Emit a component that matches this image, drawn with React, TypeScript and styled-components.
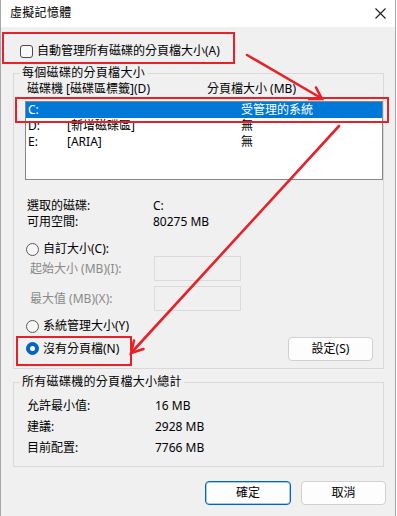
import React from "react";
import styled, { createGlobalStyle } from "styled-components";

const GlobalStyle = createGlobalStyle`
  html, body { margin: 0; padding: 0; background: #ffffff; }
  body {
    font-family: "Noto Sans", "Noto Sans CJK TC", sans-serif;
    font-size: 12px;
    color: #000;
  }
  * { box-sizing: border-box; }
`;

const Window = styled.div`
  position: relative;
  width: 396px;
  height: 516px;
  background: #f0f0f0;
  border-left: 1px solid #a8a8a8;
  border-right: 1px solid #a8a8a8;
  display: flex;
  flex-direction: column;
`;

const TitleBar = styled.div`
  height: 27px;
  background: #ffffff;
  display: flex;
  align-items: center;
  justify-content: space-between;
  padding: 0 9px 1px 9px;
`;

const Title = styled.div`
  font-size: 12px;
  line-height: 16px;
  letter-spacing: 0.3px;
`;

const Body = styled.div`
  display: flex;
  flex-direction: column;
  padding-left: 12px;
`;

const CheckRow = styled.label`
  display: flex;
  align-items: center;
  gap: 4px;
  height: 16px;
  margin: 16px 0 0 7px;
  line-height: 16px;
`;

const CheckBox = styled.span`
  width: 13px;
  height: 13px;
  border: 1px solid #4a4a4a;
  border-radius: 3px;
  background: #f8f8f8;
`;

const Group = styled.fieldset<{ $top: number; $pb: number }>`
  width: 371px;
  margin: ${(p) => p.$top}px 0 0 0;
  padding: 0 0 ${(p) => p.$pb}px 11px;
  border: 1px solid #d9d9d9;
  min-width: 0;
`;

const Legend = styled.legend`
  margin-left: -5px;
  padding: 0 2px;
  line-height: 16px;
  font-size: 12px;
  letter-spacing: 0.3px;
`;

const HeaderRow = styled.div`
  display: grid;
  grid-template-columns: 180px 1fr;
  height: 16px;
  line-height: 16px;
  padding-left: 2px;
`;

const ListBox = styled.div`
  width: 358px;
  height: 79px;
  margin-top: 4px;
  border: 1px solid #868686;
  background: #ffffff;
  display: flex;
  flex-direction: column;
`;

const ListRow = styled.div<{ $selected?: boolean }>`
  display: grid;
  grid-template-columns: 39px 174px 1fr;
  height: 16px;
  line-height: 16px;
  padding-left: 2px;
  background: ${(p) => (p.$selected ? "#0078d7" : "transparent")};
  color: ${(p) => (p.$selected ? "#ffffff" : "#000000")};
`;

const InfoGrid = styled.div<{ $top: number; $col: number; $gap: number }>`
  display: grid;
  grid-template-columns: ${(p) => p.$col}px 1fr;
  grid-auto-rows: 16px;
  row-gap: ${(p) => p.$gap}px;
  line-height: 16px;
  margin-top: ${(p) => p.$top}px;
  padding-left: 2px;
`;

const RadioRow = styled.label<{ $top: number }>`
  display: flex;
  align-items: center;
  gap: 4px;
  height: 14px;
  line-height: 14px;
  margin-top: ${(p) => p.$top}px;
  padding-left: 1px;
`;

const Radio = styled.span<{ $checked?: boolean }>`
  width: 13px;
  height: 13px;
  border-radius: 50%;
  border: 1px solid ${(p) => (p.$checked ? "#0067c0" : "#5a5a5a")};
  background: ${(p) => (p.$checked ? "#0067c0" : "#f6f6f6")};
  display: flex;
  align-items: center;
  justify-content: center;
  &::after {
    content: "";
    width: 5px;
    height: 5px;
    border-radius: 50%;
    background: #ffffff;
    display: ${(p) => (p.$checked ? "block" : "none")};
  }
`;

const SizeRow = styled.div<{ $top: number }>`
  display: grid;
  grid-template-columns: 124px 87px;
  align-items: center;
  height: 25px;
  margin-top: ${(p) => p.$top}px;
  padding-left: 5px;
  color: #8a8a8a;
  line-height: 16px;
`;

const SizeInput = styled.div`
  width: 87px;
  height: 25px;
  border: 1px solid #dadada;
  background: #f0f0f0;
`;

const BottomRow = styled.div`
  display: flex;
  align-items: center;
  justify-content: space-between;
  height: 25px;
  margin-top: 3px;
  padding-right: 10px;
`;

const PushButton = styled.button<{ $width: number; $default?: boolean }>`
  width: ${(p) => p.$width}px;
  height: 24px;
  border-radius: 4px;
  border: 1px solid ${(p) => (p.$default ? "#0067c0" : "#d0d0d0")};
  box-shadow: ${(p) => (p.$default ? "inset 0 0 0 1px rgba(0,103,192,0.35)" : "none")};
  background: #fdfdfd;
  font-family: "Noto Sans", "Noto Sans CJK TC", sans-serif;
  font-size: 12px;
  line-height: 16px;
  color: #000;
  padding: 0;
`;

const ButtonBar = styled.div`
  display: flex;
  justify-content: flex-end;
  gap: 10px;
  margin-top: 14px;
  padding-right: 9px;
`;

const Callout = styled.div<{ $x: number; $y: number; $w: number; $h: number }>`
  position: absolute;
  left: ${(p) => p.$x}px;
  top: ${(p) => p.$y}px;
  width: ${(p) => p.$w}px;
  height: ${(p) => p.$h}px;
  border: 2px solid #e6212a;
  pointer-events: none;
`;

const ArrowLayer = styled.svg`
  position: absolute;
  left: -1px;
  top: 0;
  pointer-events: none;
`;

const CloseIcon = () => (
  <svg width="11" height="11" viewBox="0 0 11 11">
    <path d="M0.5 0.5 L10.5 10.5 M10.5 0.5 L0.5 10.5" stroke="#1b1b1b" strokeWidth="1.1" fill="none" />
  </svg>
);

export default function App() {
  return (
    <>
      <GlobalStyle />
      <Window>
        <TitleBar>
          <Title>虛擬記憶體</Title>
          <CloseIcon />
        </TitleBar>
        <Body>
          <CheckRow>
            <CheckBox />
            <span>自動管理所有磁碟的分頁檔大小(A)</span>
          </CheckRow>

          <Group $top={6} $pb={7}>
            <Legend>每個磁碟的分頁檔大小</Legend>
            <HeaderRow>
              <span>磁碟機 [磁碟區標籤](D)</span>
              <span>分頁檔大小 (MB)</span>
            </HeaderRow>
            <ListBox>
              <ListRow $selected>
                <span>C:</span>
                <span></span>
                <span>受管理的系統</span>
              </ListRow>
              <ListRow>
                <span>D:</span>
                <span>[新增磁碟區]</span>
                <span>無</span>
              </ListRow>
              <ListRow>
                <span>E:</span>
                <span>[ARIA]</span>
                <span>無</span>
              </ListRow>
            </ListBox>

            <InfoGrid $top={18} $col={126} $gap={0}>
              <span>選取的磁碟:</span>
              <span>C:</span>
              <span>可用空間:</span>
              <span>80275 MB</span>
            </InfoGrid>

            <RadioRow $top={12}>
              <Radio />
              <span>自訂大小(C):</span>
            </RadioRow>
            <SizeRow $top={0}>
              <span>起始大小 (MB)(I):</span>
              <SizeInput />
            </SizeRow>
            <SizeRow $top={5}>
              <span>最大值 (MB)(X):</span>
              <SizeInput />
            </SizeRow>
            <RadioRow $top={8}>
              <Radio />
              <span>系統管理大小(Y)</span>
            </RadioRow>
            <BottomRow>
              <RadioRow $top={0}>
                <Radio $checked />
                <span>沒有分頁檔(N)</span>
              </RadioRow>
              <PushButton $width={85}>設定(S)</PushButton>
            </BottomRow>
          </Group>

          <Group $top={5} $pb={10}>
            <Legend>所有磁碟機的分頁檔大小總計</Legend>
            <InfoGrid $top={8} $col={128} $gap={5}>
              <span>允許最小值:</span>
              <span>16 MB</span>
              <span>建議:</span>
              <span>2928 MB</span>
              <span>目前配置:</span>
              <span>7766 MB</span>
            </InfoGrid>
          </Group>
        </Body>

        <ButtonBar>
          <PushButton $width={86} $default>確定</PushButton>
          <PushButton $width={85}>取消</PushButton>
        </ButtonBar>

        <Callout $x={1} $y={32} $w={233} $h={32} />
        <Callout $x={14} $y={97} $w={374} $h={26} />
        <Callout $x={15} $y={336} $w={116} $h={30} />

        <ArrowLayer width="397" height="516" viewBox="0 0 397 516">
          <g stroke="#e6212a" strokeWidth="2.6" strokeLinecap="round" fill="none">
            <path d="M247 55 L321 98" />
            <path d="M316 87.5 L322 99 L309 99" />
            <path d="M339 126 L132 352" />
            <path d="M143.5 349 L131 353 L134 340.5" />
          </g>
        </ArrowLayer>
      </Window>
    </>
  );
}
